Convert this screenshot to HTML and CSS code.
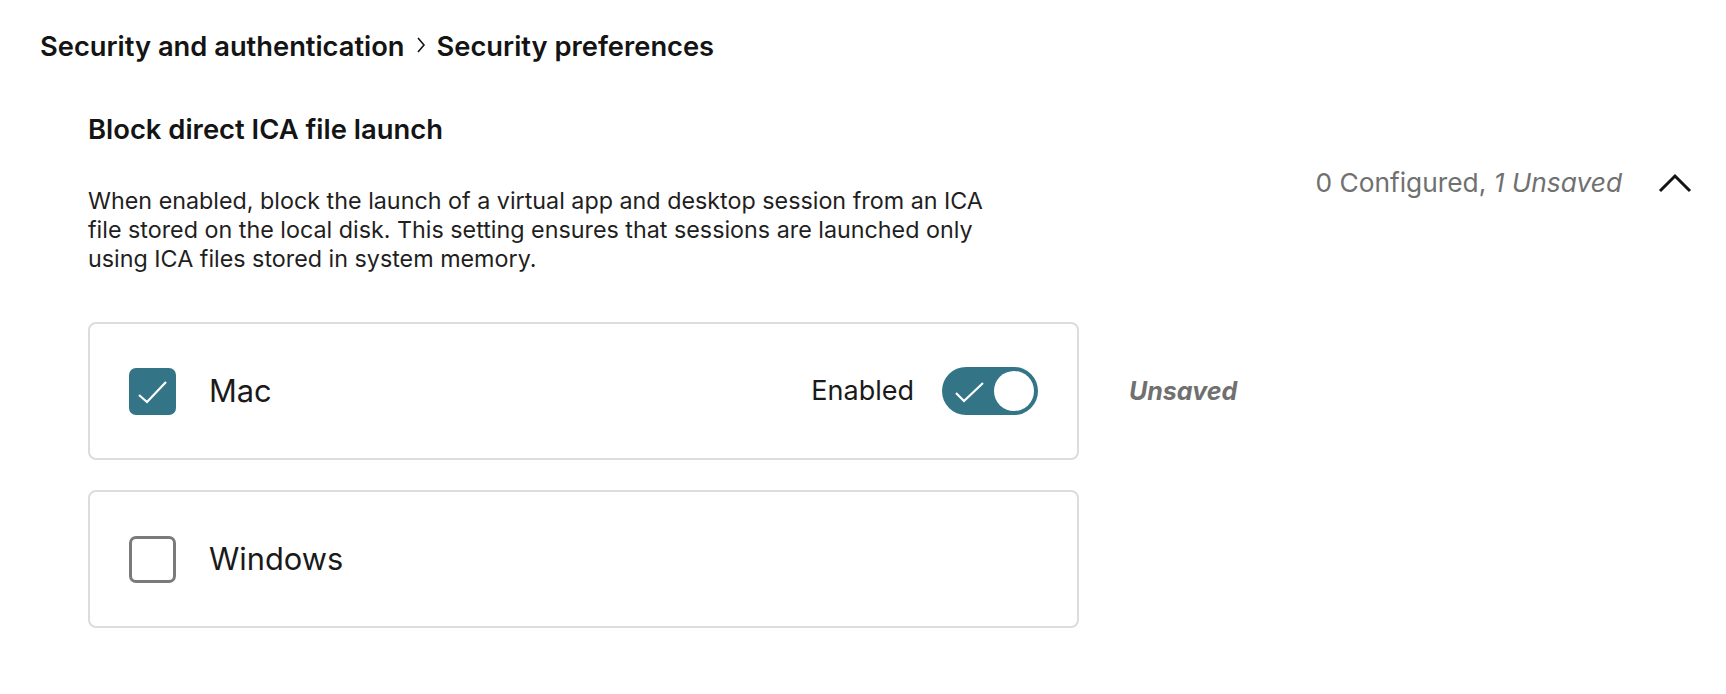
FILE: index.html
```html
<!DOCTYPE html>
<html lang="en">
<head>
<meta charset="utf-8">
<title>Security preferences</title>
<link rel="stylesheet" href="styles.css">
</head>
<body>
<div class="page">
  <nav class="breadcrumb">
    <span class="crumb">Security and authentication</span>
    <svg class="crumb-sep" viewBox="0 0 12 20" width="12" height="20" aria-hidden="true"><path d="M3 3 L9 10 L3 17" fill="none" stroke="#141414" stroke-width="1.6"/></svg>
    <span class="crumb">Security preferences</span>
  </nav>

  <section class="setting">
    <div class="setting-head">
      <div class="setting-info">
        <h2 class="setting-title">Block direct ICA file launch</h2>
        <p class="setting-desc">When enabled, block the launch of a virtual app and desktop session from an ICA file stored on the local disk. This setting ensures that sessions are launched only using ICA files stored in system memory.</p>
      </div>
      <div class="summary">
        <span class="summary-text">0 Configured, <em>1 Unsaved</em></span>
        <svg class="chevron" viewBox="0 0 34 20" width="34" height="20" aria-hidden="true"><path d="M2 18 L17 3 L32 18" fill="none" stroke="#141414" stroke-width="3"/></svg>
      </div>
    </div>

    <div class="platforms">
      <div class="platform-row">
        <div class="card">
          <span class="checkbox checked">
            <svg viewBox="0 0 47 47" width="47" height="47" aria-hidden="true"><path d="M10 27 L18 34 L37 14" fill="none" stroke="#fff" stroke-width="2.2"/></svg>
          </span>
          <span class="platform-name">Mac</span>
          <span class="toggle-label">Enabled</span>
          <span class="toggle on">
            <svg class="toggle-check" viewBox="0 0 96 48" width="96" height="48" aria-hidden="true"><path d="M14 26 L22 34 L41 16" fill="none" stroke="#fff" stroke-width="2.2"/></svg>
            <span class="knob"></span>
          </span>
        </div>
        <span class="status">Unsaved</span>
      </div>
      <div class="platform-row">
        <div class="card">
          <span class="checkbox"></span>
          <span class="platform-name">Windows</span>
        </div>
      </div>
    </div>
  </section>
</div>
</body>
</html>
```

FILE: styles.css
```css
* { box-sizing: border-box; }

html, body {
  margin: 0;
  background: #ffffff;
}

body {
  font-family: "Inter", "Roboto", "Liberation Sans", sans-serif;
  color: #141414;
}

.page {
  padding: 31px 34px 0 40px;
}

.breadcrumb {
  display: flex;
  align-items: center;
  gap: 10px;
  height: 32px;
  font-size: 27.3px;
  line-height: 32px;
  font-weight: 600;
  color: #141414;
}

.crumb-sep {
  display: block;
  margin-top: -4px;
}

.setting {
  margin-left: 48px;
  margin-top: 51px;
}

.setting-head {
  display: flex;
  justify-content: space-between;
  align-items: flex-start;
}

.setting-info {
  width: 912px;
}

.setting-title {
  margin: 0;
  font-size: 27.4px;
  line-height: 30px;
  font-weight: 600;
  color: #141414;
}

.setting-desc {
  margin: 42px 0 0 0;
  font-size: 23.3px;
  line-height: 29px;
  color: #1f1f1f;
}

.summary {
  display: flex;
  align-items: center;
  gap: 36px;
  margin-top: 53px;
  height: 32px;
}

.summary-text {
  font-size: 26.3px;
  line-height: 32px;
  color: #707070;
}

.summary-text em {
  font-style: italic;
}

.chevron {
  display: block;
}

.platforms {
  display: flex;
  flex-direction: column;
  gap: 30px;
  margin-top: 49px;
}

.platform-row {
  display: flex;
  align-items: center;
  gap: 50px;
}

.card {
  width: 991px;
  height: 138px;
  border: 2px solid #dcdcdc;
  border-radius: 8px;
  padding: 0 39px;
  display: flex;
  align-items: center;
}

.checkbox {
  width: 47px;
  height: 47px;
  border-radius: 7px;
  border: 3px solid #7a7a7a;
  background: #fff;
  flex: none;
  display: flex;
}

.checkbox.checked {
  border: none;
  background: #347487;
}

.checkbox svg {
  display: block;
}

.platform-name {
  margin-left: 33px;
  font-size: 30.8px;
  line-height: 36px;
  color: #1a1a1a;
}

.toggle-label {
  margin-left: auto;
  font-size: 27px;
  line-height: 34px;
  color: #1a1a1a;
}

.toggle {
  margin-left: 28px;
  width: 96px;
  height: 48px;
  border-radius: 24px;
  background: #347487;
  position: relative;
  flex: none;
}

.toggle-check {
  display: block;
  position: absolute;
  left: 0;
  top: 0;
}

.knob {
  position: absolute;
  right: 4px;
  top: 4px;
  width: 40px;
  height: 40px;
  border-radius: 50%;
  background: #fff;
}

.status {
  font-size: 25px;
  line-height: 32px;
  font-weight: 700;
  font-style: italic;
  color: #707070;
}
```
